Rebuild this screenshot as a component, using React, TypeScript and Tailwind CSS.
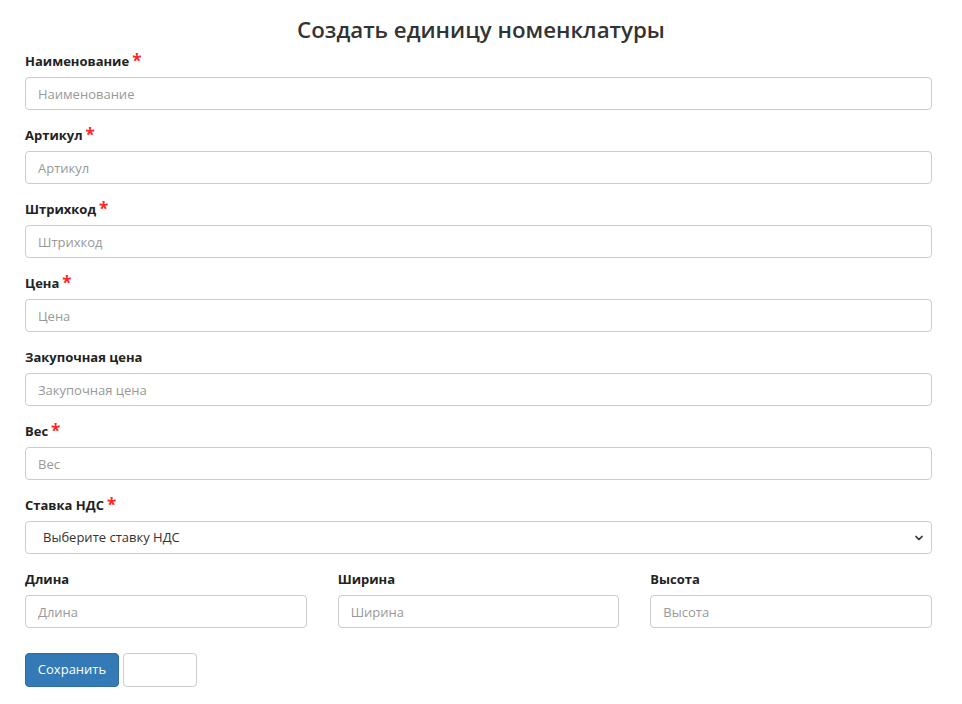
import { ChevronDown } from "lucide-react";

const font = { fontFamily: '"Open Sans", "Noto Sans", sans-serif' };

function Label({ text, required }: { text: string; required?: boolean }) {
  return (
    <label className="flex items-start h-[29px] pt-[4px] text-[13px] font-bold text-[#222]">
      {text}
      {required && <span className="ml-[3px] -mt-[1px] text-[17px] leading-[20px] font-bold text-[#ff2525]">*</span>}
    </label>
  );
}

function Field({ label, required }: { label: string; required?: boolean }) {
  return (
    <div className="flex flex-col">
      <Label text={label} required={required} />
      <input
        placeholder={label}
        className="h-[33px] w-full rounded-[4px] border border-[#ccc] bg-white px-[12px] text-[13px] text-[#333] placeholder:text-[#999] outline-none"
      />
    </div>
  );
}

export default function App() {
  return (
    <div className="min-h-[704px] bg-white px-[25px] pb-[18px]" style={font}>
      <h1 className="pt-[14px] pb-[2px] text-center text-[22.3px] font-semibold leading-[32px] text-[#333]">
        Создать единицу номенклатуры
      </h1>
      <div className="w-[907px] flex flex-col gap-[12px]">
        <Field label="Наименование" required />
        <Field label="Артикул" required />
        <Field label="Штрихкод" required />
        <Field label="Цена" required />
        <Field label="Закупочная цена" />
        <Field label="Вес" required />
        <div className="flex flex-col">
          <Label text="Ставка НДС" required />
          <div className="relative h-[33px] rounded-[4px] border border-[#ccc] bg-white flex items-center px-[17px] text-[13px] text-[#333]">
            Выберите ставку НДС
            <ChevronDown className="absolute right-[6px] top-[10px] h-[12px] w-[12px] text-[#333]" strokeWidth={3.5} />
          </div>
        </div>
        <div className="grid grid-cols-3 gap-x-[31px]">
          <Field label="Длина" />
          <Field label="Ширина" />
          <Field label="Высота" />
        </div>
        <div className="flex gap-[4px] pt-[13px]">
          <button className="h-[34px] w-[94px] rounded-[4px] border border-[#2e6da4] bg-[#337ab7] text-[13px] text-white">
            Сохранить
          </button>
          <button className="h-[34px] w-[74px] rounded-[4px] border border-[#ccc] bg-white" />
        </div>
      </div>
    </div>
  );
}
